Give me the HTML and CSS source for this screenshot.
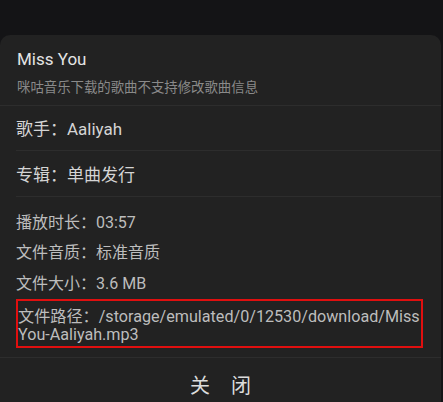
FILE: index.html
```html
<!DOCTYPE html>
<html lang="zh-CN">
<head>
<meta charset="utf-8">
<title>歌曲信息</title>
<link rel="stylesheet" href="styles.css">
</head>
<body>
<div class="sheet">
  <div class="head">
    <div class="title">Miss You</div>
    <div class="sub">咪咕音乐下载的歌曲不支持修改歌曲信息</div>
  </div>
  <div class="rows">
    <div class="row row-a">歌手：Aaliyah</div>
    <div class="row row-b">专辑：单曲发行</div>
  </div>
  <div class="info">
    <div class="line">播放时长：03:57</div>
    <div class="line">文件音质：标准音质</div>
    <div class="line">文件大小：3.6 MB</div>
    <div class="path">文件路径：/storage/emulated/0/12530/download/Miss You-Aaliyah.mp3</div>
  </div>
  <div class="foot"><span>关</span><span>闭</span></div>
</div>
</body>
</html>
```

FILE: styles.css
```css
html, body {
  margin: 0;
  padding: 0;
  background: #141416;
  height: 402px;
  overflow: hidden;
}
body {
  font-family: Roboto, "Noto Sans CJK SC", sans-serif;
}
.sheet {
  margin-top: 35px;
  width: 441px;
  height: 367px;
  background: #222222;
  border-radius: 10px 10px 0 0;
}
.head {
  padding: 12px 17px 7px 17px;
  border-bottom: 1px solid #2d2d2d;
}
.title {
  font-size: 17px;
  line-height: 24px;
  color: #e4e4e4;
}
.sub {
  margin-top: 7px;
  font-size: 13.4px;
  line-height: 20px;
  color: #8a8a8a;
}
.rows {
  padding-left: 16px;
}
.row {
  box-sizing: border-box;
  padding-top: 3px;
  font-size: 17px;
  color: #d4d4d4;
  border-bottom: 1px solid #2d2d2d;
}
.row-a {
  height: 45px;
  line-height: 41px;
}
.row-b {
  height: 46px;
  line-height: 42px;
}
.info {
  padding: 11px 0 9px 16px;
  border-bottom: 1px solid #2d2d2d;
}
.line {
  font-size: 16px;
  line-height: 30.33px;
  color: #bdbdbd;
}
.path {
  box-sizing: border-box;
  width: 407px;
  height: 49px;
  border: 2px solid #e00f0f;
  padding: 7px 0 0 0;
  font-size: 16.15px;
  line-height: 18.5px;
  color: #bdbdbd;
}
.foot {
  display: flex;
  justify-content: center;
  gap: 21px;
  padding-top: 1px;
  height: 55px;
  line-height: 55px;
  font-size: 20px;
  color: #dcdcdc;
}
```
